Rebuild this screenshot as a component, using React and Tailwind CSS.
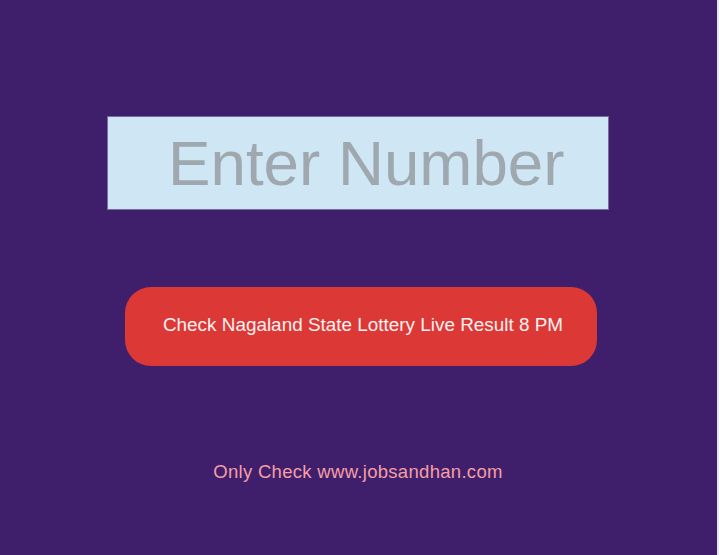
export default function App() {
  return (
    <div className="flex h-[555px] w-[719px] overflow-hidden" style={{ fontFamily: '"Liberation Sans", Arial, sans-serif' }}>
      <main className="flex w-[716px] flex-col items-center bg-[#3f1f6b] pt-[116px]">
        <div className="flex h-[94px] w-[502px] items-center border border-[#7b6a9c] bg-[#cfe6f5] pl-[60px]">
          <span className="text-[63.7px] leading-none text-[#9ea8ae]">Enter Number</span>
        </div>
        <button className="mt-[77px] ml-[6px] flex h-[79px] w-[472px] items-center justify-center rounded-[26px] bg-[#dc3835] pl-[4px] pb-[2px] text-[18.9px] font-light text-[#fdf1f1]">
          Check Nagaland State Lottery Live Result 8 PM
        </button>
        <p className="mt-[92px] text-[18.5px] tracking-[0.3px] text-[#f59ea6]">Only Check www.jobsandhan.com</p>
      </main>
      <div className="w-[1px] bg-[#3f1f6b]" />
      <div className="w-[2px] bg-[#e6e6e6]" />
    </div>
  );
}
